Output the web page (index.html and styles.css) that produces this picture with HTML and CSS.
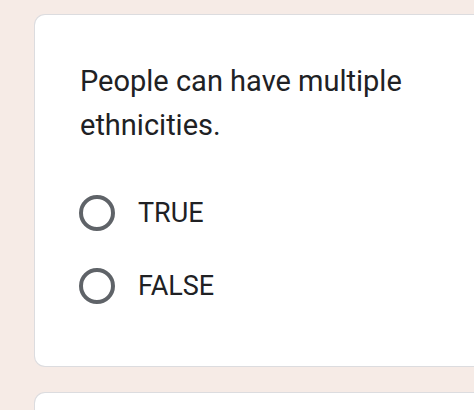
FILE: index.html
```html
<!DOCTYPE html>
<html>
<head>
<meta charset="utf-8">
<link rel="stylesheet" href="styles.css">
</head>
<body>
<div class="page">
  <div class="card">
    <div class="question">People can have multiple ethnicities.</div>
    <div class="options">
      <div class="option"><span class="radio"></span><span class="label">TRUE</span></div>
      <div class="option"><span class="radio"></span><span class="label">FALSE</span></div>
    </div>
  </div>
  <div class="card next"></div>
</div>
</body>
</html>
```
FILE: styles.css
```css
html, body {
  margin: 0;
  padding: 0;
  background: #f6ebe6;
  height: 100%;
  overflow: hidden;
}
.page {
  padding: 14px 0 0 34px;
  display: flex;
  flex-direction: column;
  gap: 25px;
  font-family: Roboto, "Liberation Sans", sans-serif;
}
.card {
  background: #fff;
  border: 1px solid #dcdcdf;
  border-right: none;
  border-radius: 11px 0 0 11px;
  height: 353px;
  box-sizing: border-box;
  padding: 44px 0 0 45px;
}
.card.next {
  height: 18px;
  border-bottom: none;
  border-radius: 11px 0 0 0;
  padding: 0;
}
.question {
  font-size: 29px;
  line-height: 44px;
  color: #202124;
  width: 360px;
}
.options {
  display: flex;
  flex-direction: column;
  gap: 37px;
  margin-top: 48px;
}
.option {
  display: flex;
  align-items: center;
  gap: 23px;
  height: 36px;
}
.radio {
  width: 36px;
  height: 36px;
  box-sizing: border-box;
  border: 4px solid #5f6368;
  border-radius: 50%;
  margin-left: -1px;
}
.label {
  font-size: 27px;
  color: #202124;
}
```
